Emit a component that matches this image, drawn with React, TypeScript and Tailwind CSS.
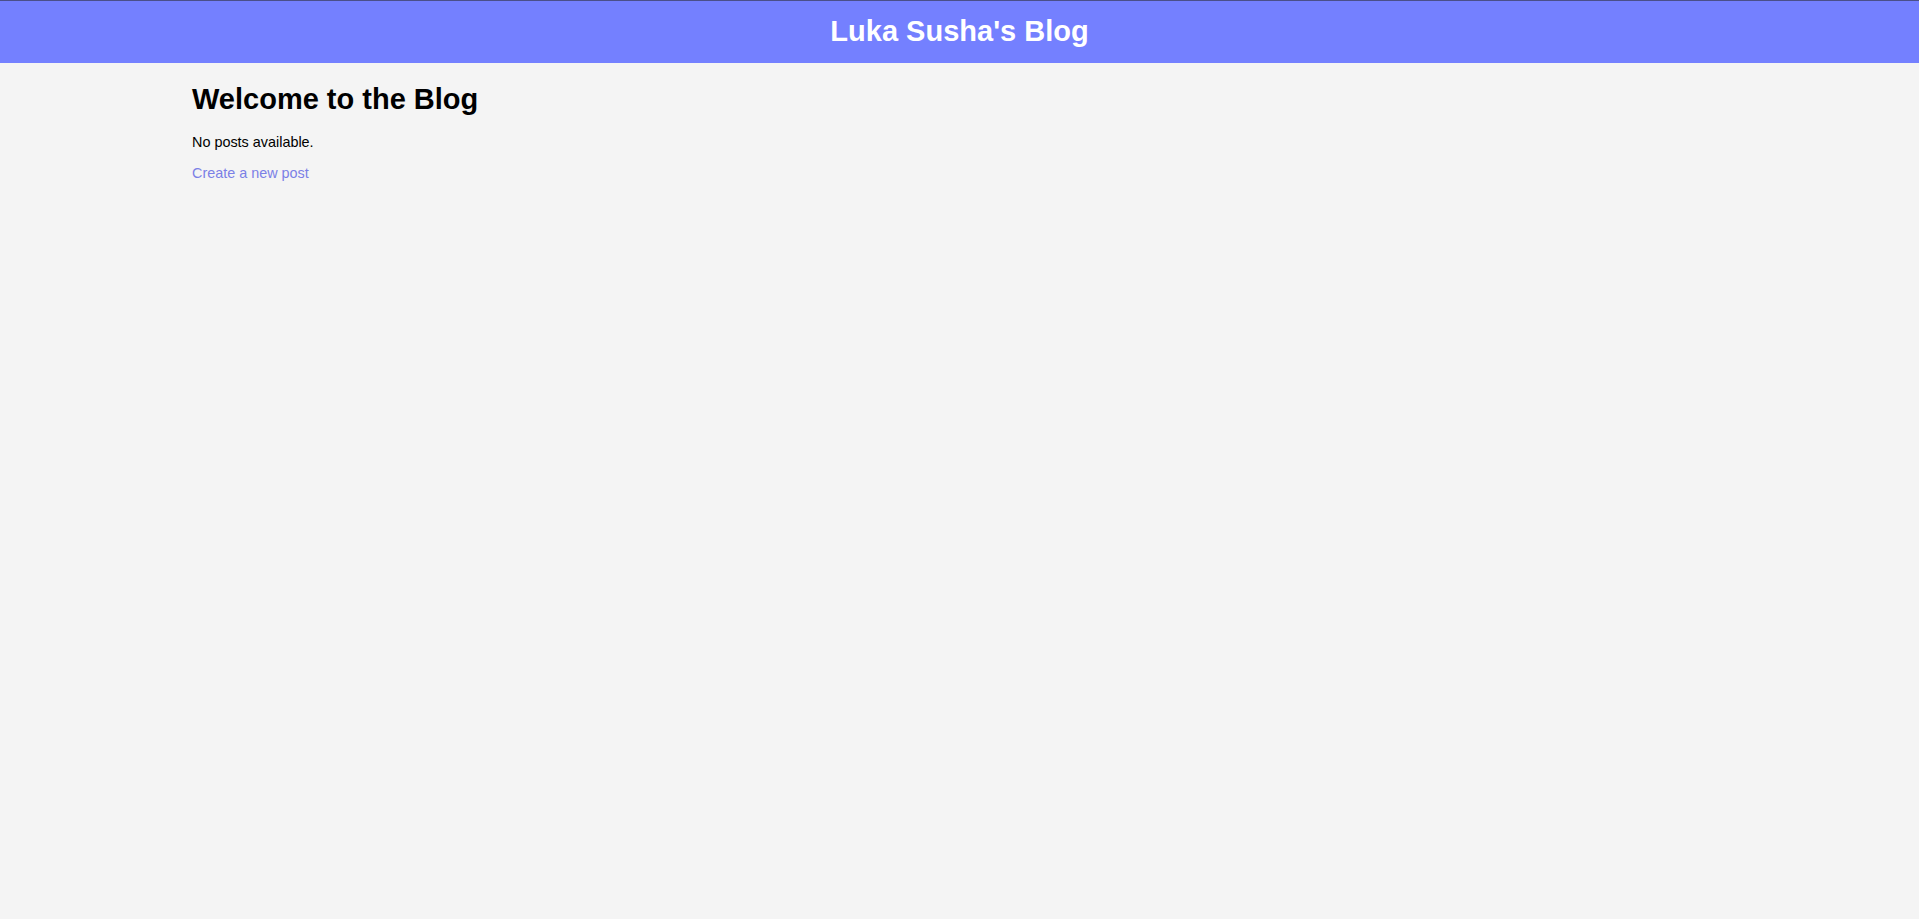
export default function App() {
  return (
    <div className="min-h-screen bg-[#f4f4f4] font-['Liberation_Sans',Arial,sans-serif]">
      {/* Header */}
      <header className="h-[63px] border-t border-[#4a4f8a] bg-[#7480ff] flex items-center justify-center">
        <h1 className="text-[29px] font-bold text-white">Luka Susha's Blog</h1>
      </header>

      {/* Content */}
      <main className="px-[192px] pt-[18px]">
        <h2 className="text-[29px] font-bold text-black leading-[36px]">Welcome to the Blog</h2>
        <p className="mt-[15px] text-[14.4px] leading-[20px] text-black">No posts available.</p>
        <a href="#" className="block mt-[11px] text-[14.4px] leading-[20px] text-[#7b80e6]">
          Create a new post
        </a>
      </main>
    </div>
  );
}
